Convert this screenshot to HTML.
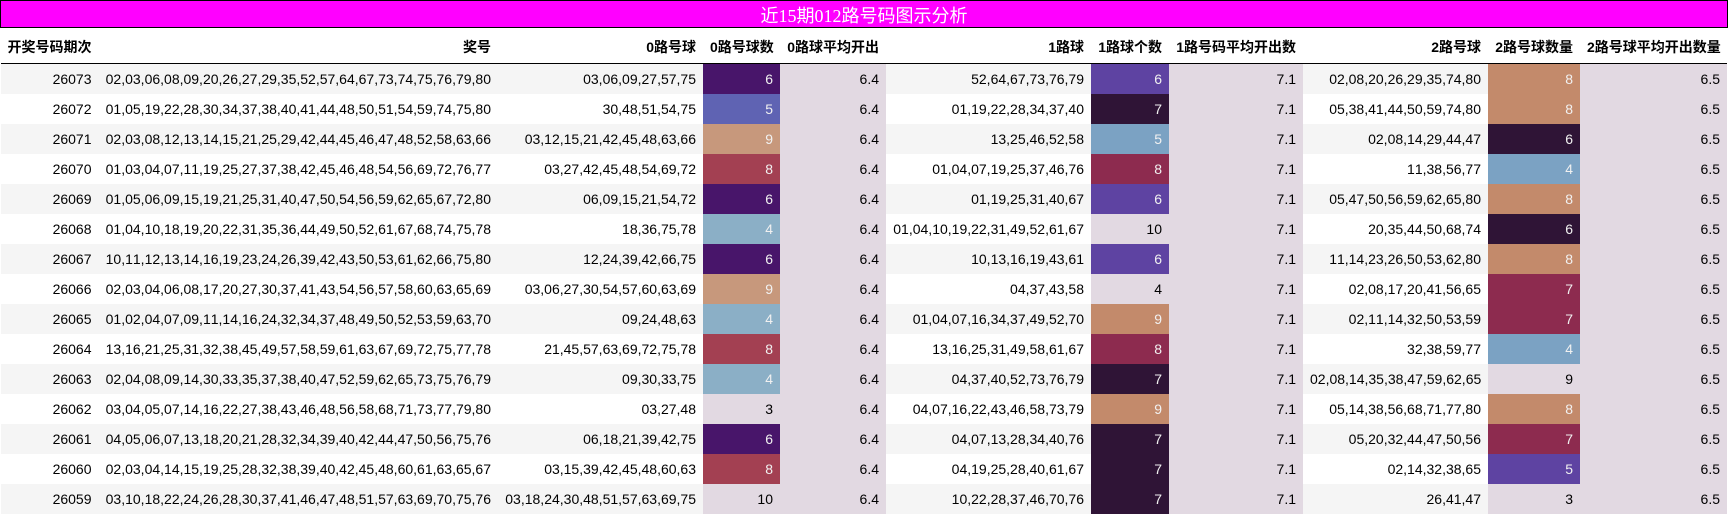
<!DOCTYPE html>
<html><head><meta charset="utf-8"><style>
html,body{margin:0;padding:0;background:#fff;width:1728px;height:515px;overflow:hidden}
.title{position:absolute;left:0;top:0;width:1726px;height:24px;padding-top:2px;border:1px solid #000;background:#f0f;color:#fff;text-align:center;font:18px/27px "Liberation Serif","Noto Sans CJK SC",serif}
table{position:absolute;left:1px;top:28px;width:1726px;table-layout:fixed;border-collapse:separate;border-spacing:0;font:14px "Liberation Sans","Noto Sans CJK SC",sans-serif;font-kerning:none;color:#000}
th{height:36px;box-sizing:border-box;padding:2px 7px 0;border-bottom:1px solid #000;text-align:right;font-weight:bold;white-space:nowrap;background:#fff}
th:first-child{padding:2px 0 0 6.5px;text-align:left}
td{height:30px;padding:0 7px;text-align:right;white-space:nowrap;box-sizing:border-box}
tr:nth-child(odd) td{background:#f5f5f5}
tr:nth-child(even) td{background:#fff}
tr td.a{background:#e2d9e2}
tr td.z4{background:#8bafc6;color:#f1f1f1}
tr td.z5{background:#5f63b3;color:#f1f1f1}
tr td.z6{background:#48156a;color:#f1f1f1}
tr td.z8{background:#a34052;color:#f1f1f1}
tr td.z9{background:#c7987c;color:#f1f1f1}
tr td.y4{background:#7ba2c3;color:#f1f1f1}
tr td.y5{background:#5e43a2;color:#f1f1f1}
tr td.y6{background:#5e43a2;color:#f1f1f1}
tr td.y7{background:#2f1436;color:#f1f1f1}
tr td.y8{background:#8d2b4f;color:#f1f1f1}
tr td.y9{background:#c38a6b;color:#f1f1f1}
tr td.w4{background:#7ba2c3;color:#f1f1f1}
tr td.w5{background:#5e43a2;color:#f1f1f1}
tr td.w6{background:#2f1436;color:#f1f1f1}
tr td.w7{background:#8d2b4f;color:#f1f1f1}
tr td.w8{background:#c38a6b;color:#f1f1f1}
</style></head><body>
<div class="title">近15期012路号码图示分析</div>
<table>
<colgroup><col style="width:97.5px"><col style="width:399.5px"><col style="width:205px"><col style="width:77px"><col style="width:106px"><col style="width:205px"><col style="width:78px"><col style="width:134px"><col style="width:185px"><col style="width:92px"><col style="width:147px"></colgroup>
<thead><tr><th>开奖号码期次</th><th>奖号</th><th>0路号球</th><th>0路号球数</th><th>0路球平均开出</th><th>1路球</th><th>1路球个数</th><th>1路号码平均开出数</th><th>2路号球</th><th>2路号球数量</th><th>2路号球平均开出数量</th></tr></thead>
<tbody>
<tr><td>26073</td><td>02,03,06,08,09,20,26,27,29,35,52,57,64,67,73,74,75,76,79,80</td><td>03,06,09,27,57,75</td><td class="z6">6</td><td class="a">6.4</td><td>52,64,67,73,76,79</td><td class="y6">6</td><td class="a">7.1</td><td>02,08,20,26,29,35,74,80</td><td class="w8">8</td><td class="a">6.5</td></tr>
<tr><td>26072</td><td>01,05,19,22,28,30,34,37,38,40,41,44,48,50,51,54,59,74,75,80</td><td>30,48,51,54,75</td><td class="z5">5</td><td class="a">6.4</td><td>01,19,22,28,34,37,40</td><td class="y7">7</td><td class="a">7.1</td><td>05,38,41,44,50,59,74,80</td><td class="w8">8</td><td class="a">6.5</td></tr>
<tr><td>26071</td><td>02,03,08,12,13,14,15,21,25,29,42,44,45,46,47,48,52,58,63,66</td><td>03,12,15,21,42,45,48,63,66</td><td class="z9">9</td><td class="a">6.4</td><td>13,25,46,52,58</td><td class="y4">5</td><td class="a">7.1</td><td>02,08,14,29,44,47</td><td class="w6">6</td><td class="a">6.5</td></tr>
<tr><td>26070</td><td>01,03,04,07,11,19,25,27,37,38,42,45,46,48,54,56,69,72,76,77</td><td>03,27,42,45,48,54,69,72</td><td class="z8">8</td><td class="a">6.4</td><td>01,04,07,19,25,37,46,76</td><td class="y8">8</td><td class="a">7.1</td><td>11,38,56,77</td><td class="w4">4</td><td class="a">6.5</td></tr>
<tr><td>26069</td><td>01,05,06,09,15,19,21,25,31,40,47,50,54,56,59,62,65,67,72,80</td><td>06,09,15,21,54,72</td><td class="z6">6</td><td class="a">6.4</td><td>01,19,25,31,40,67</td><td class="y6">6</td><td class="a">7.1</td><td>05,47,50,56,59,62,65,80</td><td class="w8">8</td><td class="a">6.5</td></tr>
<tr><td>26068</td><td>01,04,10,18,19,20,22,31,35,36,44,49,50,52,61,67,68,74,75,78</td><td>18,36,75,78</td><td class="z4">4</td><td class="a">6.4</td><td>01,04,10,19,22,31,49,52,61,67</td><td class="a">10</td><td class="a">7.1</td><td>20,35,44,50,68,74</td><td class="w6">6</td><td class="a">6.5</td></tr>
<tr><td>26067</td><td>10,11,12,13,14,16,19,23,24,26,39,42,43,50,53,61,62,66,75,80</td><td>12,24,39,42,66,75</td><td class="z6">6</td><td class="a">6.4</td><td>10,13,16,19,43,61</td><td class="y6">6</td><td class="a">7.1</td><td>11,14,23,26,50,53,62,80</td><td class="w8">8</td><td class="a">6.5</td></tr>
<tr><td>26066</td><td>02,03,04,06,08,17,20,27,30,37,41,43,54,56,57,58,60,63,65,69</td><td>03,06,27,30,54,57,60,63,69</td><td class="z9">9</td><td class="a">6.4</td><td>04,37,43,58</td><td class="a">4</td><td class="a">7.1</td><td>02,08,17,20,41,56,65</td><td class="w7">7</td><td class="a">6.5</td></tr>
<tr><td>26065</td><td>01,02,04,07,09,11,14,16,24,32,34,37,48,49,50,52,53,59,63,70</td><td>09,24,48,63</td><td class="z4">4</td><td class="a">6.4</td><td>01,04,07,16,34,37,49,52,70</td><td class="y9">9</td><td class="a">7.1</td><td>02,11,14,32,50,53,59</td><td class="w7">7</td><td class="a">6.5</td></tr>
<tr><td>26064</td><td>13,16,21,25,31,32,38,45,49,57,58,59,61,63,67,69,72,75,77,78</td><td>21,45,57,63,69,72,75,78</td><td class="z8">8</td><td class="a">6.4</td><td>13,16,25,31,49,58,61,67</td><td class="y8">8</td><td class="a">7.1</td><td>32,38,59,77</td><td class="w4">4</td><td class="a">6.5</td></tr>
<tr><td>26063</td><td>02,04,08,09,14,30,33,35,37,38,40,47,52,59,62,65,73,75,76,79</td><td>09,30,33,75</td><td class="z4">4</td><td class="a">6.4</td><td>04,37,40,52,73,76,79</td><td class="y7">7</td><td class="a">7.1</td><td>02,08,14,35,38,47,59,62,65</td><td class="a">9</td><td class="a">6.5</td></tr>
<tr><td>26062</td><td>03,04,05,07,14,16,22,27,38,43,46,48,56,58,68,71,73,77,79,80</td><td>03,27,48</td><td class="a">3</td><td class="a">6.4</td><td>04,07,16,22,43,46,58,73,79</td><td class="y9">9</td><td class="a">7.1</td><td>05,14,38,56,68,71,77,80</td><td class="w8">8</td><td class="a">6.5</td></tr>
<tr><td>26061</td><td>04,05,06,07,13,18,20,21,28,32,34,39,40,42,44,47,50,56,75,76</td><td>06,18,21,39,42,75</td><td class="z6">6</td><td class="a">6.4</td><td>04,07,13,28,34,40,76</td><td class="y7">7</td><td class="a">7.1</td><td>05,20,32,44,47,50,56</td><td class="w7">7</td><td class="a">6.5</td></tr>
<tr><td>26060</td><td>02,03,04,14,15,19,25,28,32,38,39,40,42,45,48,60,61,63,65,67</td><td>03,15,39,42,45,48,60,63</td><td class="z8">8</td><td class="a">6.4</td><td>04,19,25,28,40,61,67</td><td class="y7">7</td><td class="a">7.1</td><td>02,14,32,38,65</td><td class="w5">5</td><td class="a">6.5</td></tr>
<tr><td>26059</td><td>03,10,18,22,24,26,28,30,37,41,46,47,48,51,57,63,69,70,75,76</td><td>03,18,24,30,48,51,57,63,69,75</td><td class="a">10</td><td class="a">6.4</td><td>10,22,28,37,46,70,76</td><td class="y7">7</td><td class="a">7.1</td><td>26,41,47</td><td class="a">3</td><td class="a">6.5</td></tr>
</tbody></table>
</body></html>
